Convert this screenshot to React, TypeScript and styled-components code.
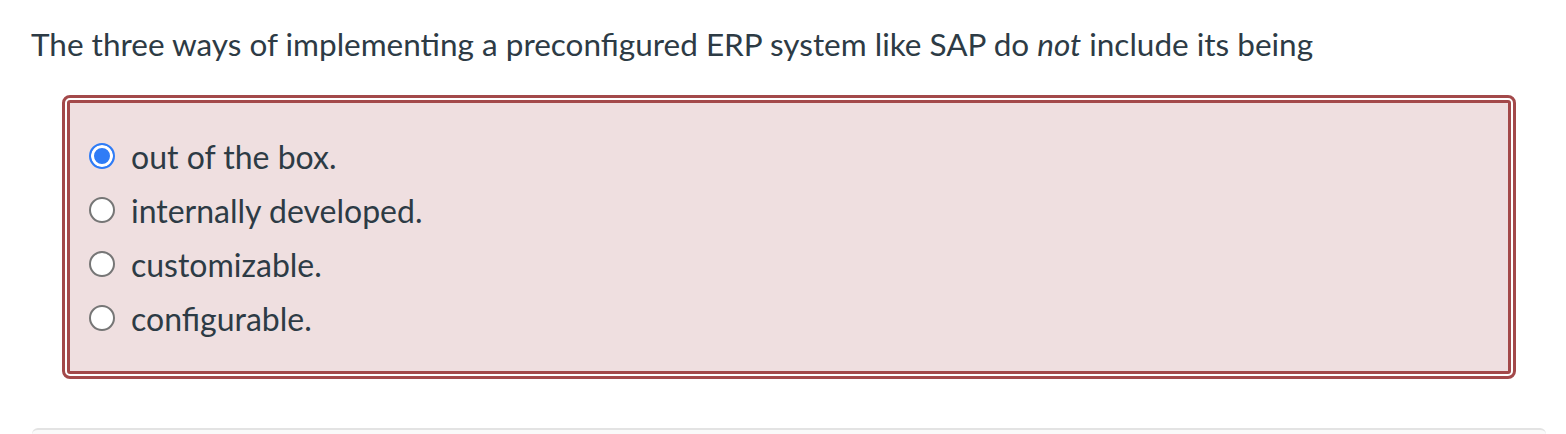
import React from "react";
import styled, { createGlobalStyle } from "styled-components";

const Global = createGlobalStyle`
  html, body { margin: 0; padding: 0; background: #ffffff; }
  body { font-family: Lato, "Noto Sans", sans-serif; color: #2d3b45; }
`;

const Page = styled.div`
  width: 1566px;
  height: 434px;
  overflow: hidden;
  padding: 0 20px 0 32px;
  box-sizing: border-box;
  display: flex;
  flex-direction: column;
`;

const Question = styled.p`
  margin: 24px 0 0 -1px;
  font-size: 31.5px;
  line-height: 40px;
  color: #2d3b45;
  em { font-style: italic; }
`;

const AnswerBox = styled.div`
  margin: 31px 0 0 30px;
  width: 1454px;
  height: 284px;
  box-sizing: border-box;
  border: 8px double #a3494a;
  border-radius: 8px;
  background: #efdfe0;
  background-clip: padding-box;
  padding: 26px 0 0 19px;
  display: flex;
  flex-direction: column;
`;

const Option = styled.label`
  display: flex;
  align-items: center;
  height: 54px;
  gap: 16px;
  font-size: 32px;
  color: #2d3b45;
`;

const Radio = styled.span<{ $checked?: boolean }>`
  width: 26px;
  height: 26px;
  box-sizing: border-box;
  border-radius: 50%;
  flex: none;
  background: ${(p) => (p.$checked ? "#2f7cf6" : "#ffffff")};
  border: ${(p) => (p.$checked ? "2px solid #2f7cf6" : "2px solid #767676")};
  box-shadow: ${(p) => (p.$checked ? "inset 0 0 0 3px #ffffff" : "none")};
`;

const Footer = styled.div`
  margin-top: auto;
  height: 4px;
  border-top: 2px solid #e3e3e3;
  border-radius: 6px 6px 0 0;
  background: #fafafa;
`;

const options = [
  "out of the box.",
  "internally developed.",
  "customizable.",
  "configurable.",
];

export default function App() {
  return (
    <>
      <Global />
      <Page>
        <Question>
          The three ways of implementing a preconfigured ERP system like SAP do <em>not</em> include its being
        </Question>
        <AnswerBox>
          {options.map((o, i) => (
            <Option key={o}>
              <Radio $checked={i === 0} />
              {o}
            </Option>
          ))}
        </AnswerBox>
        <Footer />
      </Page>
    </>
  );
}
